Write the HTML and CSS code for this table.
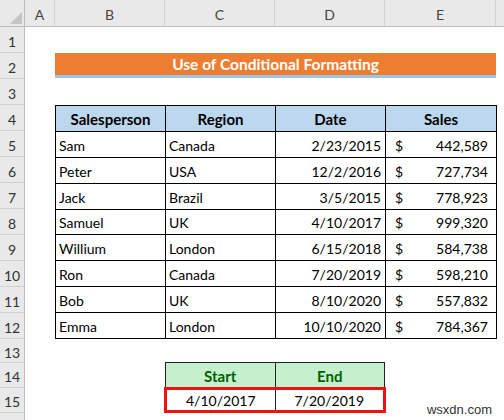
FILE: index.html
```html
<!DOCTYPE html>
<html>
<head>
<meta charset="utf-8">
<link rel="stylesheet" href="styles.css">
</head>
<body>
<div class="sheet">
  <div class="corner"><span class="tri"></span></div>
  <div class="colheads">
    <div class="ch w30">A</div>
    <div class="ch w110">B</div>
    <div class="ch w110">C</div>
    <div class="ch w110">D</div>
    <div class="ch w111">E</div>
    <div class="ch rest"></div>
  </div>
  <div class="rowheads">
    <div class="rh">1</div>
    <div class="rh">2</div>
    <div class="rh">3</div>
    <div class="rh">4</div>
    <div class="rh">5</div>
    <div class="rh">6</div>
    <div class="rh">7</div>
    <div class="rh">8</div>
    <div class="rh">9</div>
    <div class="rh">10</div>
    <div class="rh">11</div>
    <div class="rh">12</div>
    <div class="rh h24">13</div>
    <div class="rh h25">14</div>
    <div class="rh h25">15</div>
    <div class="rh last"></div>
  </div>
  <div class="body">
    <div class="title">Use of Conditional Formatting</div>
    <table class="data">
      <colgroup><col class="c110"><col class="c110"><col class="c110"><col class="c111"></colgroup>
      <tr><th>Salesperson</th><th>Region</th><th>Date</th><th>Sales</th></tr>
      <tr><td>Sam</td><td>Canada</td><td class="r">2/23/2015</td><td><div class="acct"><span>$</span><span>442,589</span></div></td></tr>
      <tr><td>Peter</td><td>USA</td><td class="r">12/2/2016</td><td><div class="acct"><span>$</span><span>727,734</span></div></td></tr>
      <tr><td>Jack</td><td>Brazil</td><td class="r">3/5/2015</td><td><div class="acct"><span>$</span><span>778,923</span></div></td></tr>
      <tr><td>Samuel</td><td>UK</td><td class="r">4/10/2017</td><td><div class="acct"><span>$</span><span>999,320</span></div></td></tr>
      <tr><td>Willium</td><td>London</td><td class="r">6/15/2018</td><td><div class="acct"><span>$</span><span>584,738</span></div></td></tr>
      <tr><td>Ron</td><td>Canada</td><td class="r">7/20/2019</td><td><div class="acct"><span>$</span><span>598,210</span></div></td></tr>
      <tr><td>Bob</td><td>UK</td><td class="r">8/10/2020</td><td><div class="acct"><span>$</span><span>557,832</span></div></td></tr>
      <tr><td>Emma</td><td>London</td><td class="r">10/10/2020</td><td><div class="acct"><span>$</span><span>784,367</span></div></td></tr>
    </table>
    <div class="range">
      <div class="rhead">
        <div class="gh">Start</div>
        <div class="gh">End</div>
      </div>
      <div class="rvals">
        <div class="rv">4/10/2017</div>
        <div class="rv">7/20/2019</div>
      </div>
    </div>
  </div>
  <div class="wm">wsxdn.com</div>
</div>
</body>
</html>
```

FILE: styles.css
```css
html, body {
  margin: 0;
  padding: 0;
  background: #ffffff;
}
.sheet {
  position: relative;
  width: 504px;
  height: 420px;
  overflow: hidden;
  display: grid;
  grid-template-columns: 25px 1fr;
  grid-template-rows: 27px 1fr;
  font-family: "Lato", "Liberation Sans", sans-serif;
  color: #000;
}
.corner {
  background: #e9e9e9;
  border-right: 1px solid #bdbdbd;
  border-bottom: 1px solid #bdbdbd;
  box-sizing: border-box;
  position: relative;
}
.tri {
  position: absolute;
  right: 2px;
  bottom: 2px;
  width: 0;
  height: 0;
  border-left: 12px solid transparent;
  border-bottom: 12px solid #c4c4c4;
}
.colheads {
  display: flex;
  background: #e9e9e9;
  border-bottom: 1px solid #bdbdbd;
  box-sizing: border-box;
}
.ch {
  flex: none;
  box-sizing: border-box;
  border-right: 1px solid #d0d0d0;
  display: flex;
  align-items: center;
  justify-content: center;
  font-size: 14px;
  color: #444;
  padding-top: 2px;
}
.w30 { width: 30px; }
.w110 { width: 110px; }
.w111 { width: 111px; }
.rest { flex: 1; border-right: none; }
.rowheads {
  display: flex;
  flex-direction: column;
  background: #e9e9e9;
  border-right: 1px solid #bdbdbd;
  box-sizing: border-box;
}
.rh {
  flex: none;
  height: 26px;
  box-sizing: border-box;
  border-bottom: 1px solid #d0d0d0;
  display: flex;
  align-items: center;
  justify-content: center;
  font-size: 14px;
  color: #333;
  padding-top: 3px;
}
.rh.h24 { height: 24px; }
.rh.h25 { height: 25px; }
.rh.last { flex: 1; border-bottom: none; }
.body {
  display: grid;
  grid-template-columns: 30px 110px 110px 110px 111px;
  grid-template-rows: repeat(12, 26px) 24px 25px 25px;
  align-content: start;
}
.title {
  grid-column: 2 / 6;
  grid-row: 2;
  height: 25px;
  box-sizing: border-box;
  background: #ed7d31;
  border-bottom: 3px solid #9dc3e6;
  color: #ffffff;
  font-weight: bold;
  font-size: 15.5px;
  line-height: 22px;
  text-align: center;
}
.data {
  grid-column: 2 / 6;
  grid-row: 4 / 13;
  border-collapse: collapse;
  table-layout: fixed;
  width: 441px;
  font-size: 14px;
}
.c110 { width: 110px; }
.c111 { width: 111px; }
.data th, .data td {
  border: 1px solid #000;
  height: 25px;
  padding: 2px 3px 0 3px;
  box-sizing: border-box;
  white-space: nowrap;
  overflow: hidden;
}
.data th {
  background: #bdd7ee;
  font-weight: bold;
  font-size: 15px;
  text-align: center;
}
.data td.r { text-align: right; padding-right: 4px; }
.acct {
  display: flex;
  justify-content: space-between;
  padding: 0 5px 0 6px;
}
.range {
  grid-column: 3 / 5;
  grid-row: 14 / 16;
  display: flex;
  flex-direction: column;
}
.rhead {
  display: flex;
  height: 26px;
  margin-top: -1px;
  box-sizing: border-box;
  border: 1px solid #222;
  border-bottom: none;
  background: #c6efce;
}
.gh {
  flex: 1;
  display: flex;
  align-items: center;
  justify-content: center;
  color: #006100;
  font-weight: bold;
  font-size: 15px;
  padding-top: 2px;
}
.gh + .gh { border-left: 1px solid #222; }
.rvals {
  display: flex;
  height: 27px;
  margin: 0 -1px;
  box-sizing: border-box;
  border: 3px solid #ee1111;
}
.rv {
  flex: 1;
  display: flex;
  align-items: center;
  justify-content: center;
  font-size: 14px;
  padding-top: 1px;
}
.rv + .rv { border-left: 1px solid #222; }
.wm {
  position: absolute;
  right: 12px;
  bottom: 3px;
  font-family: "Liberation Sans", Arial, sans-serif;
  font-size: 13px;
  color: #333;
}
```
